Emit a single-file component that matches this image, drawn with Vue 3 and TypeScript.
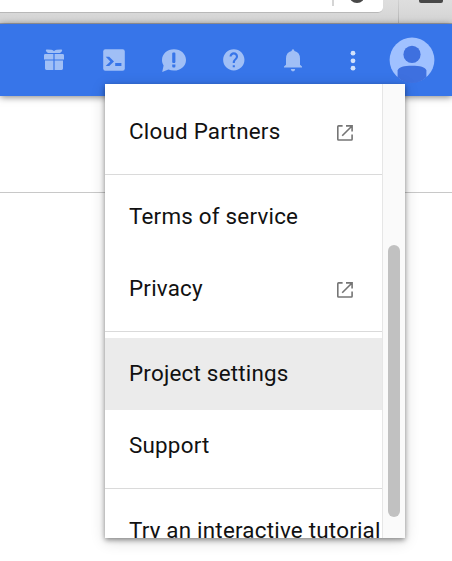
<script setup lang="ts">
interface MenuItem {
  label: string
  external?: boolean
  active?: boolean
}

const groups: MenuItem[][] = [
  [{ label: 'Cloud Partners', external: true }],
  [{ label: 'Terms of service' }, { label: 'Privacy', external: true }],
  [{ label: 'Project settings', active: true }, { label: 'Support' }],
  [{ label: 'Try an interactive tutorial' }],
]
</script>

<template>
  <div class="screen">
    <div class="browser">
      <div class="address">
        <span class="address-split"></span>
        <span class="address-knob"></span>
      </div>
      <span class="browser-split"></span>
      <span class="browser-button"></span>
    </div>

    <header class="topbar">
      <button class="tool" aria-label="Free trial">
        <svg width="24" height="24" viewBox="0 0 24 24">
          <path d="M3.8 2.2Q3.8 1.4 5 1.5L9.4 1.8Q11.2 1.9 12 3.2Q12.8 1.9 14.6 1.8L19 1.5Q20.3 1.4 20.2 2.3Q20 4 18 4.9H6Q4 4 3.8 2.2Z" />
          <path d="M3.4 5.9H11.4V11.4H2V7.3Q2 5.9 3.4 5.9ZM12.6 5.9H20.6Q22 5.9 22 7.3V11.4H12.6ZM3 12.6H11.4V22H4.4Q3 22 3 20.6ZM12.6 12.6H21V20.6Q21 22 19.6 22H12.6Z" />
        </svg>
      </button>
      <button class="tool" aria-label="Cloud Shell">
        <svg width="24" height="24" viewBox="0 0 24 24">
          <rect x="1.2" y="1.2" width="21.6" height="21.6" rx="2.2" />
          <path class="cut" d="M3.7 8.8H7.2L12 13.4L7.2 18H3.7L8.3 13.4ZM13.2 15H19.4V18H13.2Z" />
        </svg>
      </button>
      <button class="tool" aria-label="Send feedback">
        <svg width="24" height="24" viewBox="0 0 24 24">
          <path d="M12 1.2C18.8 1.2 24 5.9 24 12S18.8 22.6 12 22.6Q8.8 22.6 6.4 21.5L0.2 23.9L1.6 17.4C.4 15.7 0 13.9 0 12C0 5.9 5.2 1.2 12 1.2Z" />
          <path class="cut" d="M10.2 5.5Q10.2 4.5 11.2 4.5H12.4Q13.4 4.5 13.4 5.5V14L12.9 15H10.7L10.2 14ZM10.2 16.4H13.4V18.2Q13.4 19.4 12.4 19.4H11.2Q10.2 19.4 10.2 18.2Z" />
        </svg>
      </button>
      <button class="tool" aria-label="Help">
        <svg width="25.6" height="25.6" viewBox="0 0 24 24">
          <path d="M12 2C6.48 2 2 6.48 2 12s4.48 10 10 10 10-4.48 10-10S17.52 2 12 2zm1 17h-2v-2h2v2zm2.07-7.75l-.9.92C13.45 12.9 13 13.5 13 15h-2v-.5c0-1.1.45-2.1 1.17-2.83l1.24-1.26c.37-.36.59-.86.59-1.41 0-1.1-.9-2-2-2s-2 .9-2 2H8c0-2.21 1.79-4 4-4s4 1.79 4 4c0 .88-.36 1.68-.93 2.25z" />
        </svg>
      </button>
      <button class="tool" aria-label="Notifications">
        <svg width="24" height="24" viewBox="0 0 24 24">
          <path d="M12 1.2Q13.4 1.2 13.4 2.9Q19 4.2 19 10.5V16.8L21 18.6V19.6H3V18.6L5 16.8V10.5Q5 4.2 10.6 2.9Q10.6 1.2 12 1.2ZM9.8 21H14.2Q14 23.4 12 23.4T9.8 21Z" />
        </svg>
      </button>
      <button class="tool bright" aria-label="More options">
        <svg width="24" height="24" viewBox="0 0 24 24">
          <circle cx="12" cy="5.2" r="2.4" /><circle cx="12" cy="12.8" r="2.4" /><circle cx="12" cy="20.2" r="2.4" />
        </svg>
      </button>
      <button class="tool avatar" aria-label="Account">
        <svg width="46" height="46" viewBox="0 0 46 46">
          <circle cx="23" cy="23" r="22.4" fill="#a0c1ff" />
          <circle cx="23" cy="17.4" r="8.6" fill="#3e70df" />
          <path d="M8.6 40.2V33.5C9.6 30 15 28.8 23 28.8S36.4 30 37.4 33.5V40.2Q31 46 23 46T8.6 40.2Z" fill="#3e70df" />
        </svg>
      </button>
    </header>

    <main class="page"></main>

    <div class="menu">
      <div class="menu-list">
        <div v-for="(group, g) in groups" :key="g" class="group">
          <div v-for="item in group" :key="item.label" class="item" :class="{ active: item.active }">
            <span class="label">{{ item.label }}</span>
            <svg v-if="item.external" class="external" width="16" height="16" viewBox="0 0 16 16">
              <path d="M5.6 .9H1.6Q.8 .9.8 1.7V14.2Q.8 15 1.6 15H14.3Q15.1 15 15.1 14.2V9.4M9 .9H15.1V6.6M15 1L5.2 10.8" />
            </svg>
          </div>
        </div>
      </div>
      <div class="track"><div class="thumb"></div></div>
    </div>
  </div>
</template>

<style>
body {
  overflow: hidden;
}
</style>

<style scoped>
.screen {
  position: relative;
  width: 452px;
  height: 561px;
  overflow: hidden;
  background: #fff;
  font-family: Roboto, "Liberation Sans", sans-serif;
}
.browser {
  box-sizing: border-box;
  display: flex;
  height: 24px;
  background: linear-gradient(#dedede, #d4d4d4);
  border-bottom: 1px solid #a5a5aa;
}
.address {
  box-sizing: border-box;
  display: flex;
  width: 383px;
  height: 13px;
  background: #fff;
  border-bottom: 1px solid #b8b8b8;
  border-bottom-right-radius: 5px;
  overflow: hidden;
}
.address-split {
  width: 1.5px;
  height: 6px;
  margin-left: 332px;
  background: #d5d5d5;
}
.address-knob {
  width: 16px;
  height: 16px;
  margin: -13px 0 0 15px;
  border-radius: 50%;
  background: #484848;
}
.browser-split {
  width: 1px;
  margin-left: 15px;
  background: linear-gradient(#d2d2d2, #b5b5b5);
}
.browser-button {
  width: 24px;
  height: 3px;
  margin-left: 20px;
  border-radius: 0 0 2px 2px;
  background: #484848;
}
.topbar {
  position: relative;
  box-sizing: border-box;
  display: grid;
  grid-template-columns: repeat(5, 59.8px) 59px 59px;
  align-items: center;
  height: 72px;
  padding-left: 24.1px;
  background: #3775e9;
  box-shadow: 0 1px 7px rgba(0, 0, 0, 0.5);
}
.tool {
  display: flex;
  justify-content: center;
  padding: 0;
  border: 0;
  background: none;
}
.tool svg {
  display: block;
  flex: none;
  fill: #a0bff6;
}
.tool .cut {
  fill: #3775e9;
}
.tool.bright svg {
  fill: #d2e1fb;
}
.page {
  height: 96px;
  border-bottom: 1px solid #c8c8c8;
}
.menu {
  position: absolute;
  top: 84px;
  left: 105px;
  display: flex;
  width: 299.5px;
  height: 454px;
  background: #fff;
  box-shadow: 0 2px 5px rgba(0, 0, 0, 0.42), 0 3px 14px rgba(0, 0, 0, 0.16);
}
.menu-list {
  box-sizing: border-box;
  flex: none;
  width: 277px;
  height: 100%;
  padding-top: 12px;
  overflow: hidden;
}
.group + .group {
  margin-top: 6px;
  padding-top: 6px;
  border-top: 1px solid #dadada;
}
.item {
  box-sizing: border-box;
  display: flex;
  align-items: center;
  justify-content: space-between;
  height: 72px;
  padding: 0 29px 0 24px;
  color: #111;
  font-size: 22.4px;
  letter-spacing: 0.22px;
  white-space: nowrap;
}
.label {
  padding-bottom: 2px;
}
.item.active {
  background: #ebebeb;
}
.external {
  flex: none;
  margin-top: 2px;
  fill: none;
  stroke: #757575;
  stroke-width: 1.6;
}
.track {
  box-sizing: border-box;
  flex: 1;
  padding: 161px 4px 0 5px;
  background: #fafafa;
  border-left: 1.5px solid #e6e6e6;
}
.thumb {
  width: 12px;
  height: 272px;
  border-radius: 6px;
  background: #c1c1c1;
}
</style>
